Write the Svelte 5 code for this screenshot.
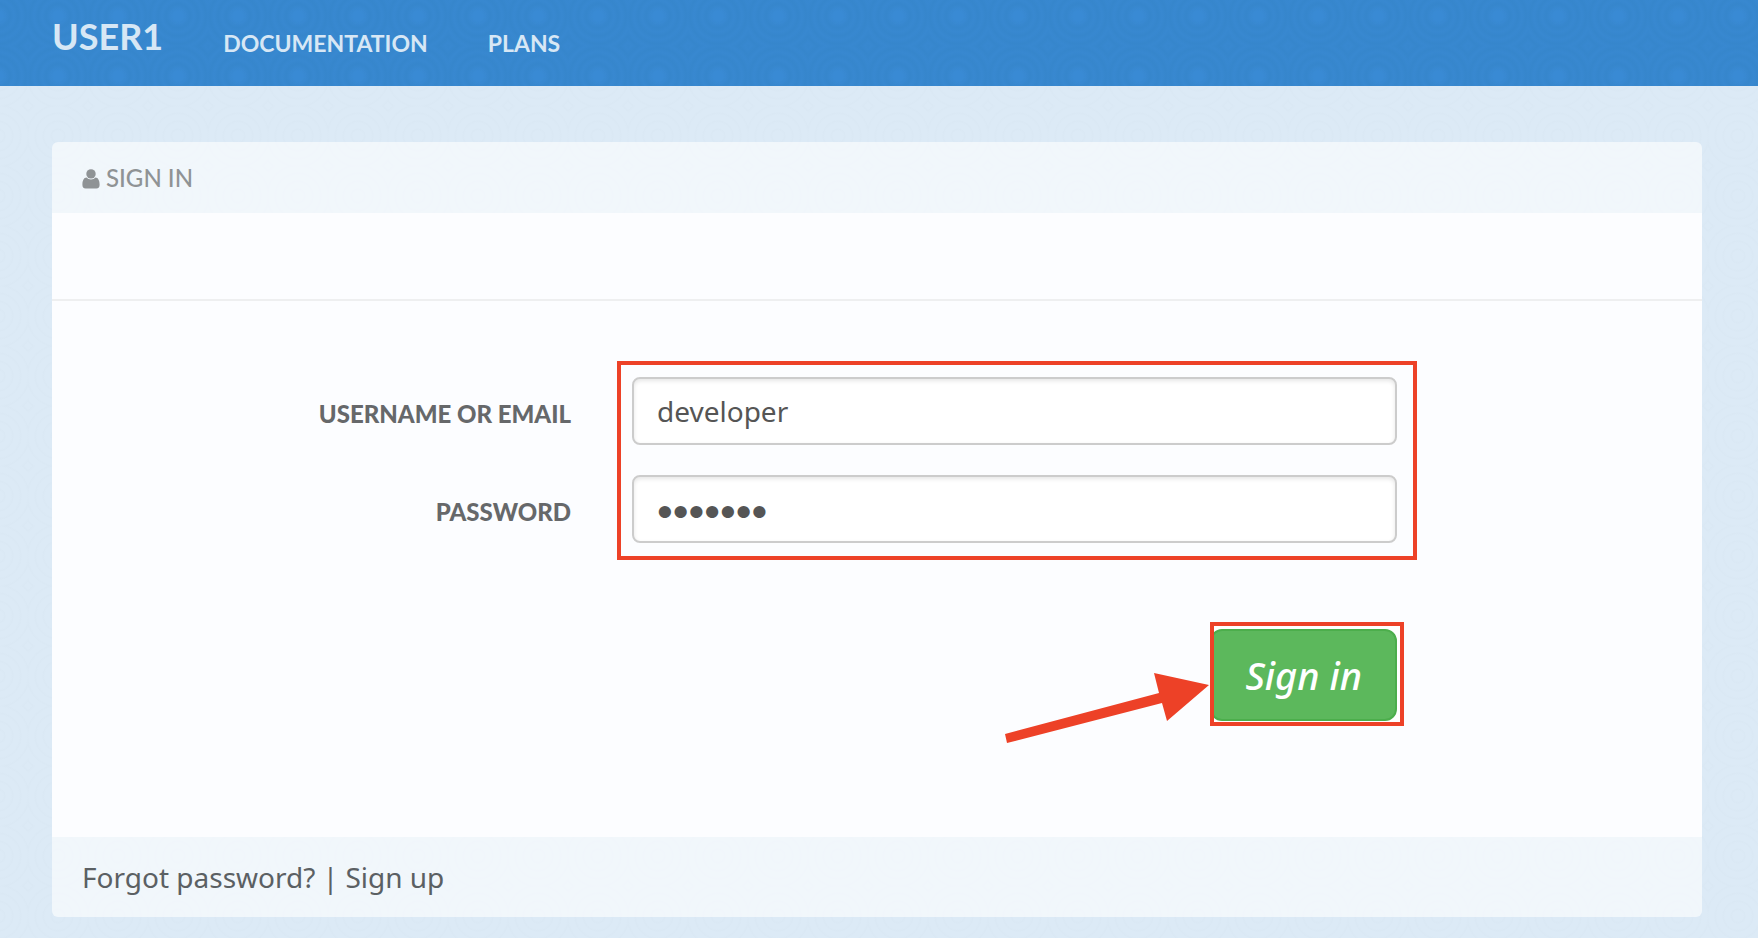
<script>
  let username = $state('developer');
  let password = $state('secret1');
</script>

<div class="page">
  <header class="topbar">
    <a class="brand" href="#home">USER1</a>
    <nav>
      <a href="#documentation">DOCUMENTATION</a>
      <a href="#plans">PLANS</a>
    </nav>
  </header>

  <main>
    <section class="panel">
      <h1 class="panel-head">
        <svg class="user" viewBox="0 0 18 20" aria-hidden="true">
          <path d="M4.5 8.6C2 8.6 0.5 11.4 0.4 15.4C0.3 18 1.4 19.4 3.7 19.4H14.3C16.6 19.4 17.7 18 17.6 15.4C17.5 11.4 16 8.6 13.5 8.6C12.3 9.8 10.8 10.5 9 10.5S5.700 9.800 4.500 8.600Z" />
          <circle cx="9" cy="4.900" r="4.700" />
        </svg>
        <span>SIGN IN</span>
      </h1>

      <div class="strip"></div>

      <form onsubmit={(e) => e.preventDefault()}>
        <div class="fields">
          <label class="row-one" for="username">USERNAME OR EMAIL</label>
          <input class="row-one" id="username" type="text" bind:value={username} />
          <label class="row-two" for="password">PASSWORD</label>
          <input class="row-two" id="password" type="password" bind:value={password} />
          <div class="frame"></div>
        </div>

        <div class="actions">
          <div class="submit">
            <button type="submit">Sign in</button>
            <svg class="arrow" viewBox="0 0 204 70" aria-hidden="true">
              <path d="M0 61L154 20L149 0L204 12L162 48L157 30L2 70Z" />
            </svg>
          </div>
        </div>
      </form>

      <footer>
        <a href="#forgot">Forgot password?</a> | <a href="#signup">Sign up</a>
      </footer>
    </section>
  </main>
</div>

<style>
  :global(body) {
    margin: 0;
  }

  .page {
    min-height: 100vh;
    box-sizing: border-box;
    font-family: 'Noto Sans', 'Open Sans', sans-serif;
    color: #5b6063;
    background-color: #dceaf6;
    background-image: repeating-radial-gradient(circle at center, #dceaf6 0, #dceaf6 5px, #dae8f4 7px, #dceaf6 8px);
    background-size: 60px 60px;
    background-position: 28px -14px;
  }

  a {
    color: inherit;
    text-decoration: none;
  }

  .topbar {
    display: flex;
    gap: 60px;
    height: 86px;
    box-sizing: border-box;
    padding: 0 52px;
    font-family: Lato, sans-serif;
    color: #d7e7f5;
    background-color: #3787cf;
    background-image:
      radial-gradient(circle at center, #398ad4 5px, transparent 9px),
      repeating-radial-gradient(circle at center, #3888d0 0, #3686cc 4px, #3888d0 8px);
    background-size: 60px 60px;
    background-position: 28px -14px;
  }

  .brand {
    font-size: 36px;
    line-height: 72px;
    font-weight: 700;
  }

  nav {
    display: flex;
    gap: 60px;
    font-size: 23px;
    line-height: 86px;
    font-weight: 700;
  }

  main {
    padding: 56px 56px 20px 52px;
  }

  .panel {
    border-radius: 6px;
    overflow: hidden;
  }

  .panel-head {
    display: flex;
    align-items: center;
    gap: 6px;
    height: 71px;
    margin: 0;
    padding: 0 30px;
    font: 500 24px/71px Lato, sans-serif;
    color: #8f9395;
    background: rgba(255, 255, 255, 0.6);
  }

  .user {
    width: 18px;
    height: 20px;
    margin-top: 2px;
    fill: currentColor;
  }

  .strip {
    height: 86px;
    background: #fcfdff;
    border-bottom: 2px solid #eeeff0;
  }

  form {
    padding: 76px 0 111px;
    background: #fcfdff;
  }

  .fields {
    display: grid;
    grid-template-columns: 519fr 765fr 244fr;
    column-gap: 61px;
    row-gap: 30px;
    align-items: center;
  }

  .row-one {
    grid-row: 1;
  }

  .row-two {
    grid-row: 2;
  }

  label {
    grid-column: 1;
    padding-top: 5px;
    text-align: right;
    font: 900 24px/30px Lato, sans-serif;
    color: #66686a;
  }

  input {
    grid-column: 2;
    width: 100%;
    height: 68px;
    box-sizing: border-box;
    padding: 0 23px;
    border: 2px solid #ccc;
    border-radius: 8px;
    background: #fff;
    box-shadow: inset 0 2px 4px rgba(0, 0, 0, 0.1);
    font: 28px 'Noto Sans', sans-serif;
    color: #555;
    outline: none;
  }

  input[type='password'] {
    padding-top: 6px;
    font: 45px 'Liberation Sans', sans-serif;
  }

  .frame {
    grid-column: 2;
    grid-row: 1 / 3;
    align-self: stretch;
    margin: -16px -20px -17px -15px;
    border: 4px solid #ed4127;
    pointer-events: none;
  }

  .actions {
    display: grid;
    grid-template-columns: 519fr 765fr 244fr;
    column-gap: 61px;
    margin-top: 79px;
  }

  .submit {
    position: relative;
    grid-column: 2;
    justify-self: end;
    margin-right: -7px;
    padding: 7px 7px 5px 0;
    background: #fff;
  }

  .submit::after {
    content: '';
    position: absolute;
    inset: 0;
    border: 4px solid #ed4127;
    pointer-events: none;
  }

  button {
    display: block;
    height: 92px;
    padding: 0 33px;
    border: 2px solid #4cae4c;
    border-radius: 12px;
    background: #5cb85c;
    color: #fff;
    font: italic 500 38px 'Noto Sans', sans-serif;
  }

  .arrow {
    position: absolute;
    top: 51px;
    right: 100%;
    width: 204px;
    height: 70px;
    margin-right: 1px;
    fill: #ed4127;
  }

  footer {
    height: 80px;
    padding: 0 30px;
    font-size: 28px;
    line-height: 80px;
    background: rgba(255, 255, 255, 0.6);
  }
</style>
